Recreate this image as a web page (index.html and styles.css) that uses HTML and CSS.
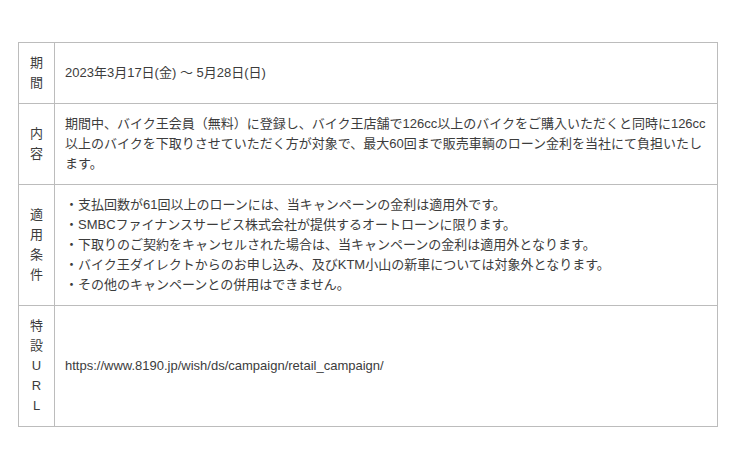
FILE: index.html
```html
<!DOCTYPE html>
<html lang="ja">
<head>
<meta charset="utf-8">
<link rel="stylesheet" href="styles.css">
</head>
<body>
<div class="wrap">
<table class="info">
  <tr class="r1">
    <th>期<br>間</th>
    <td>2023年3月17日(金) ～ 5月28日(日)</td>
  </tr>
  <tr>
    <th>内<br>容</th>
    <td>期間中、バイク王会員（無料）に登録し、バイク王店舗で126cc以上のバイクをご購入いただくと同時に126cc以上のバイクを下取りさせていただく方が対象で、最大60回まで販売車輌のローン金利を当社にて負担いたします。</td>
  </tr>
  <tr>
    <th>適<br>用<br>条<br>件</th>
    <td>・支払回数が61回以上のローンには、当キャンペーンの金利は適用外です。<br>・SMBCファイナンスサービス株式会社が提供するオートローンに限ります。<br>・下取りのご契約をキャンセルされた場合は、当キャンペーンの金利は適用外となります。<br>・バイク王ダイレクトからのお申し込み、及びKTM小山の新車については対象外となります。<br>・その他のキャンペーンとの併用はできません。</td>
  </tr>
  <tr>
    <th>特<br>設<br>U<br>R<br>L</th>
    <td>https://www.8190.jp/wish/ds/campaign/retail_campaign/</td>
  </tr>
</table>
</div>
</body>
</html>
```
FILE: styles.css
```css
html, body {
  margin: 0;
  padding: 0;
  background: #fff;
}
.wrap {
  padding: 42px 0 0 18px;
}
.info {
  width: 700px;
  border-collapse: collapse;
  font-family: "Liberation Sans", "Noto Sans CJK JP", sans-serif;
  font-size: 13px;
  line-height: 20px;
  color: #3c3c3c;
}
.info th, .info td {
  border: 1px solid #bcbcbc;
  padding: 10px 10px;
  vertical-align: middle;
  text-align: left;
  font-weight: normal;
}
.info th {
  width: 15px;
  text-align: center;
  padding: 10px 10px;
}
.info td {
  padding-right: 8px;
}
```
